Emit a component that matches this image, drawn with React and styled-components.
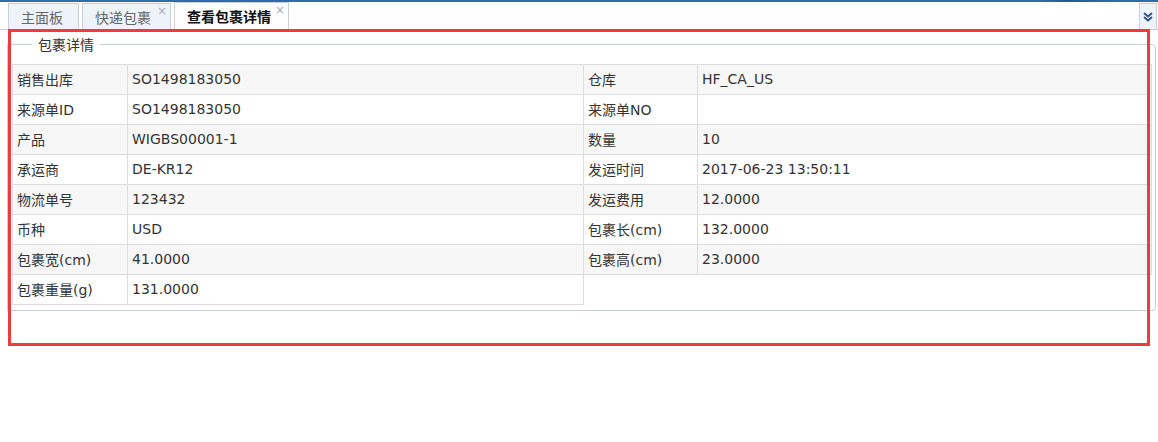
import React from 'react';
import styled, { createGlobalStyle } from 'styled-components';

const GlobalStyle = createGlobalStyle`
	html, body {
		margin: 0;
		padding: 0;
		background: #fff;
	}
	body {
		font-family: 'DejaVu Sans', 'Noto Sans CJK SC', sans-serif;
		font-size: 14px;
		color: #333;
	}
`;

const Page = styled.div`
	position: relative;
	width: 1158px;
	height: 442px;
	overflow: hidden;
`;

const TopStrip = styled.div`
	height: 2px;
	background: linear-gradient(90deg, #2a6db0 0%, #2a6db0 90%, #1d5a99 92%, #2a6db0 96%);
`;

const TabBar = styled.div`
	display: flex;
	align-items: flex-end;
	height: 27px;
	padding-left: 8px;
	border-bottom: 1px solid #c5d0dc;
	gap: 3px;
`;

const Tab = styled.div`
	position: relative;
	box-sizing: border-box;
	height: ${(p) => (p.$active ? '28px' : '26px')};
	margin-bottom: ${(p) => (p.$active ? '-1px' : '0')};
	display: flex;
	align-items: center;
	padding: 0 ${(p) => p.$pr || 18}px 0 12px;
	background: ${(p) => (p.$active ? '#fff' : '#eef3f9')};
	border: 1px solid #c5d0dc;
	border-bottom: ${(p) => (p.$active ? '1px solid #fff' : '0')};
	font-size: 14px;
	color: ${(p) => (p.$active ? '#111' : '#666')};
	font-weight: ${(p) => (p.$active ? 'bold' : 'normal')};
	font-family: 'Noto Sans CJK SC', sans-serif;
	line-height: 1;
`;

const Close = styled.span`
	position: absolute;
	top: 1px;
	right: 3px;
	font-size: 12px;
	color: #aab;
	font-weight: normal;
	font-family: 'DejaVu Sans', sans-serif;
`;

const Spacer = styled.div`
	flex: 1;
`;

const ScrollBtn = styled.div`
	box-sizing: border-box;
	width: 18px;
	height: 26px;
	margin-right: 1px;
	background: #eef3f9;
	border: 1px solid #c5d0dc;
	border-bottom: 0;
	display: flex;
	align-items: center;
	justify-content: center;
`;

const Content = styled.div`
	padding: 0 2px 0 7px;
`;

const Fieldset = styled.fieldset`
	margin: 5px 0 0 0;
	padding: 11px 5px 5px 4px;
	border: 1px solid #c8cfd6;
	border-radius: 0 4px 4px 0;
	min-width: 0;
`;

const Legend = styled.legend`
	margin-left: 20px;
	padding: 0 6px;
	font-family: 'Noto Sans CJK SC', sans-serif;
	font-size: 14px;
	color: #333;
	line-height: 18px;
`;

const Table = styled.table`
	border-collapse: collapse;
	width: 1139px;
	table-layout: fixed;
`;

const Row = styled.tr`
	background: ${(p) => (p.$odd ? '#f7f7f7' : '#fff')};
`;

const Cell = styled.td`
	box-sizing: border-box;
	height: 30px;
	padding: 0 0 2px 4px;
	border: 1px solid #dddddd;
	font-size: 14px;
	color: #333;
	white-space: nowrap;
	overflow: hidden;
	font-family: 'DejaVu Sans', 'Noto Sans CJK SC', sans-serif;
	background: ${(p) => (p.$blank ? '#fff' : 'transparent')};
	border-right: ${(p) => (p.$blank ? '0' : '1px solid #dddddd')};
	border-bottom: ${(p) => (p.$blank ? '0' : '1px solid #dddddd')};
`;

const Annotation = styled.div`
	position: absolute;
	left: 8px;
	top: 29px;
	width: 1142px;
	height: 317px;
	box-sizing: border-box;
	border: 3px solid #ee3b3b;
	pointer-events: none;
`;

const rows = [
	['销售出库', 'SO1498183050', '仓库', 'HF_CA_US'],
	['来源单ID', 'SO1498183050', '来源单NO', ''],
	['产品', 'WIGBS00001-1', '数量', '10'],
	['承运商', 'DE-KR12', '发运时间', '2017-06-23 13:50:11'],
	['物流单号', '123432', '发运费用', '12.0000'],
	['币种', 'USD', '包裹长(cm)', '132.0000'],
	['包裹宽(cm)', '41.0000', '包裹高(cm)', '23.0000'],
	['包裹重量(g)', '131.0000'],
];

function ChevronsDown() {
	return (
		<svg width='12' height='12' viewBox='0 0 12 12'>
			<path d='M2 2 L6 5.5 L10 2' fill='none' stroke='#2d4f8a' strokeWidth='1.8' />
			<path d='M2 6 L6 9.5 L10 6' fill='none' stroke='#2d4f8a' strokeWidth='1.8' />
		</svg>
	);
}

export default function App() {
	return (
		<Page>
			<GlobalStyle />
			<TopStrip />
			<TabBar>
				<Tab $pr={15}>主面板</Tab>
				<Tab $pr={19}>
					快递包裹
					<Close>×</Close>
				</Tab>
				<Tab $active $pr={17}>
					查看包裹详情
					<Close>×</Close>
				</Tab>
				<Spacer />
				<ScrollBtn>
					<ChevronsDown />
				</ScrollBtn>
			</TabBar>
			<Content>
				<Fieldset>
					<Legend>包裹详情</Legend>
					<Table>
						<colgroup>
							<col style={{ width: 115 }} />
							<col style={{ width: 456 }} />
							<col style={{ width: 114 }} />
							<col style={{ width: 454 }} />
						</colgroup>
						<tbody>
							{rows.map((r, i) => (
								<Row key={i} $odd={i % 2 === 0}>
									<Cell>{r[0]}</Cell>
									<Cell>{r[1]}</Cell>
									{r.length > 2 ? (
										<>
											<Cell>{r[2]}</Cell>
											<Cell>{r[3]}</Cell>
										</>
									) : (
										<Cell colSpan={2} $blank />
									)}
								</Row>
							))}
						</tbody>
					</Table>
				</Fieldset>
			</Content>
			<Annotation />
		</Page>
	);
}
